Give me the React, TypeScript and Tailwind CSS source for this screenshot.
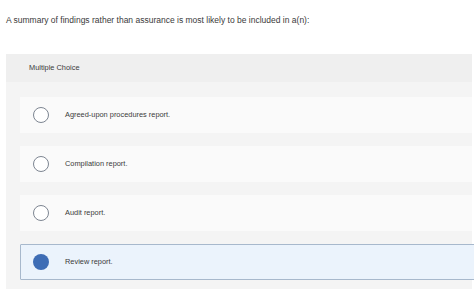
import React from "react";

const options = [
  { label: "Agreed-upon procedures report.", selected: false },
  { label: "Compilation report.", selected: false },
  { label: "Audit report.", selected: false },
  { label: "Review report.", selected: true },
];

export default function App() {
  return (
    <div
      className="w-[474px] h-[289px] overflow-hidden bg-white text-[#3a3a3a]"
      style={{ fontFamily: '"Liberation Sans", Arial, sans-serif' }}
    >
      <div className="pt-[15px] pl-[6px] text-[8.5px] leading-[11px]">
        A summary of findings rather than assurance is most likely to be included in a(n):
      </div>
      <div className="mt-[28px] ml-[6px] w-[466px] bg-[#f4f4f4] pb-[10px]">
        <div className="h-[28px] bg-[#efefef] pl-[23px] flex items-center text-[7.4px] text-[#3a3a3a]">
          Multiple Choice
        </div>
        <div className="flex flex-col gap-[13px] pt-[15px] pl-[14px]">
          {options.map((o) =>
            o.selected ? (
              <div
                key={o.label}
                className="h-[36px] w-[456px] flex items-center border border-[#a7b8cc] bg-[#ebf3fc] rounded-[1px]"
              >
                <div className="ml-[12px] w-[16px] h-[16px] rounded-full bg-[#3e6db5]" />
                <span className="ml-[16px] text-[7.4px] text-[#3a3a3a]">{o.label}</span>
              </div>
            ) : (
              <div
                key={o.label}
                className="h-[36px] w-[452px] flex items-center bg-[#fafafa]"
              >
                <div className="ml-[13px] w-[16px] h-[16px] rounded-full border border-[#7d8591] bg-white" />
                <span className="ml-[16px] text-[7.4px] text-[#3a3a3a]">{o.label}</span>
              </div>
            )
          )}
        </div>
      </div>
    </div>
  );
}
